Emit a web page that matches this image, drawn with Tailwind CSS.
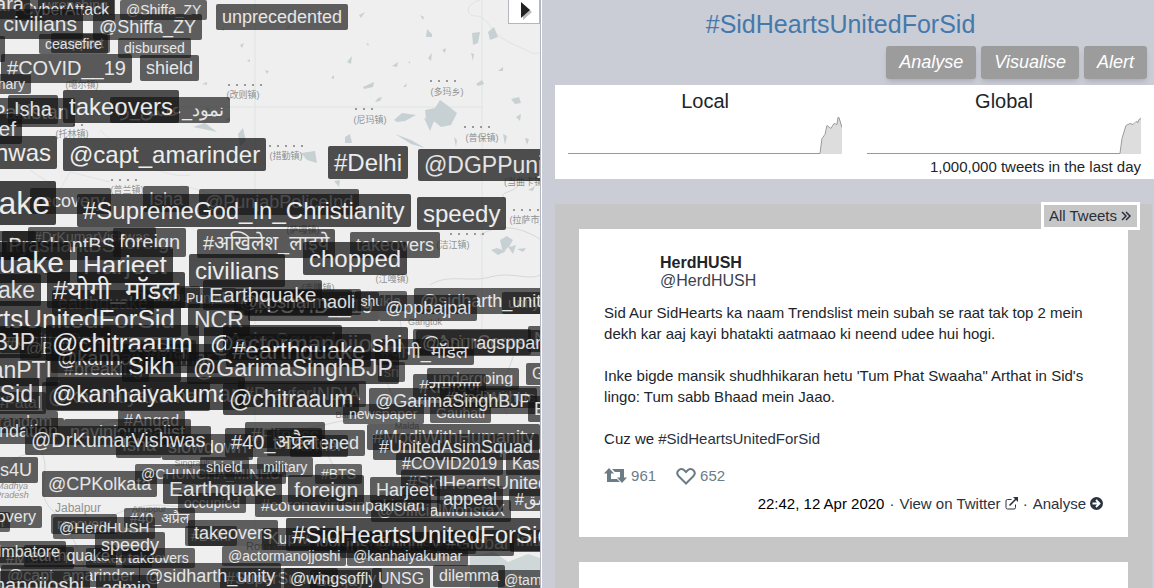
<!DOCTYPE html>
<html lang="en">
<head>
<meta charset="utf-8">
<title>#SidHeartsUnitedForSid</title>
<script src="https://cdn.jsdelivr.net/npm/@tailwindcss/browser@4"></script>
</head>
<body class="flex h-screen overflow-hidden bg-[#cacdd6] font-['Liberation_Sans','Noto_Sans','Noto_Sans_CJK_SC',sans-serif] text-[#212529]">

<main class="relative w-[46.8%] shrink-0 overflow-hidden bg-[#efefef]" aria-label="Trends map">
  <svg class="absolute top-0 left-0 h-[588px] w-[540px]" viewBox="0 0 540 588" fill="none">
    <g stroke="#e0e4e4">
      <path d="M0 107H482M482 0V330M255 0V588"/>
      <path d="M480 0c-16 5-14 16-4 16s14 12 22 19 20 11 30 16 8 1 12 2M100 130c20 20 60 50 90 45M180 185c30 6 60 24 90 18M30 170l30 20 10-18 40 10"/>
      <path d="M505 200c-8-10 10-6 14-16s14-4 22-6M430 285c18-12 40-2 60-8s40 4 50-2M480 235c20-12 40-8 60 4M0 470c30-30 60-10 90-38s60 8 100-8M40 450c14 20-8 40 12 60s40 60 30 78M60 540c40-12 60-40 110-34s90-50 160-28M250 430c60 10 90-20 140-10M320 430c4 30 24 40 20 70M400 320c8 30-24 40-10 70s10 20 30 40M515 330c5 40-25 50-8 85" stroke="#d6d8d8"/>
    </g>
    <path d="M470 588V556l24-4 14 10 20-8 12 4v30z" fill="#cfd7d8"/>
    <g fill="#c7d1d3">
      <path d="M425 110l10-2 5-8 7 5 10 8-6 12-10 2-6-5-9-3zM424 118l10 3-4 10zM394 120l8-7 14 2-11 6-8 1zM472 33l8-1-2 11-5 2zM488 32l6-5 4 10-8 3zM345 137l5-3 2 9h-7zM301 153l14-2 2 12-10-3zM395 134l16 6 14 8-14-4zM193 127l12-4 12 9-9-2zM238 134l5-6 3 13-6 5z"/>
      <path d="M347 62l5-6-1 8zM427 29l5 5v3h-6zM428 58l4-5-1 8zM442 50l4-2-1 5zM471 53l3 1-1 7zM476 84l6-4 2 4-6 2zM403 87l4-4-1 4zM363 87l11-5-1 5-9 2zM511 99l8-2 2 6-6 1zM503 134l4 2-2 9zM454 137l3 3-1 7zM491 250l6-2 9 3-8 4zM516 117l5-3-1 7zM525 138l4 1-2 6zM498 71l5-4v4zM392 66l6-4-1 5zM375 102l3-4 4-1-2 4zM334 181l6-1-1 7zM331 78l3-3v4zM285 30l6-6-1 3zM359 15l6-3-4 6zM420 15l4 2-1 3zM408 63l2-2v2zM366 43l3 1-1 2zM528 190l7-4-2 5zM225 120l5-3v4zM202 84l5-2v3zM240 45l4-2-2 5zM247 61l3-2v3zM221 30l3-2v3zM233 15l4-2-1 5zM265 70l4 1-2 3zM206 109l3-1v3z"/>
      <path d="M500 240l7-4 6 4-4 7 7-2-3 9-5-7-5 6zM517 249l9-1-3 4z"/>
    </g>
    <g fill="#8f9292" font-size="9" text-anchor="middle">
      <text x="370" y="123">(尼玛镇)</text><text x="447" y="95">(多玛乡)</text><text x="482" y="141">(普保镇)</text>
      <text x="286" y="159">(措勤镇)</text><text x="243" y="98">(改则镇)</text><text x="72" y="137">(托林镇)</text>
      <text x="127" y="193">(普兰镇)</text><text x="82" y="88">(噶尔镇)</text><text x="526" y="223">(拉萨市)</text>
      <text x="453" y="248">(洁江镇)</text><text x="392" y="282">(江嘎镇)</text><text x="318" y="291">(吉隆镇)</text><text x="303" y="233">(萨嘎镇)</text>
      <text x="525" y="185">(当曲卡镇)</text>
      <text x="425" y="325">Gangtok</text><text x="345" y="418">Barh</text><text x="407" y="429">Malda</text>
      <text x="192" y="466">Singrauli</text><text x="149" y="512">Anuppur</text><text x="12" y="489" font-style="italic">Madhya</text><text x="12" y="498" font-style="italic">Pradesh</text>
      <text x="78" y="512" font-size="12">Jabalpur</text><text x="268" y="550" font-size="11">Rourkela</text>
    </g>
    <path d="M355 109h20M430 81h32M464 127h32M269 146h34M228 85h34M111 180h30M73 125h14M450 234h38M513 210h28" stroke="#999" stroke-width="2" stroke-dasharray="2 6"/>
  </svg>
  <div id="labels"></div>
  <button type="button" aria-label="Collapse map" class="absolute -top-2 right-0 flex h-8 w-8 items-center justify-center border border-[#b4b6bb] bg-white">
    <svg class="mt-[6px] ml-1 h-5 w-4" viewBox="0 0 16 20"><path d="M5 3v16l9-8z" fill="#bbb"/><path d="M3 1v16l9-8z" fill="#222"/></svg>
  </button>
</main>

<aside class="min-w-0 flex-1 overflow-hidden border-l border-[#b4b7c0]">
  <div class="flex h-full flex-col border-l border-white pl-[13px]">
    <h1 class="shrink-0 pt-2 pr-7 text-center text-[25px] leading-8 text-[#4579ab]"><a href="#">#SidHeartsUnitedForSid</a></h1>
    <div class="flex shrink-0 justify-end gap-[5px] pt-[6px] pr-[7px] pb-[6px] text-lg leading-[33px] text-white italic">
      <button type="button" class="rounded-[3px] bg-[#9c9c9c] px-[13px] italic shadow-md">Analyse</button>
      <button type="button" class="rounded-[3px] bg-[#9c9c9c] px-[13px] italic shadow-md">Visualise</button>
      <button type="button" class="rounded-[3px] bg-[#9c9c9c] px-[13px] italic shadow-md">Alert</button>
    </div>
    <section class="shrink-0 bg-white px-[13px] pb-px">
      <div class="grid grid-cols-2 gap-[25px]">
        <div>
          <h2 class="pt-1 text-center text-xl leading-6">Local</h2>
          <svg class="mt-1 block h-[38px] w-full" viewBox="0 0 274 38" preserveAspectRatio="none"><path d="M252 37l2-15 3-4 2-9 4 3 3-5 3 1 1-8h1l3 10v27z" fill="#ddd"/><path d="M0 36.500H252l2-15 3-4 2-9 4 3 3-5 3 1 1-7h1l3 10" fill="none" stroke="#999"/></svg>
        </div>
        <div>
          <h2 class="pt-1 text-center text-xl leading-6">Global</h2>
          <svg class="mt-1 block h-[38px] w-full" viewBox="0 0 274 38" preserveAspectRatio="none"><path d="M253 37l2-15 4-13 4-2h4l4-3 3-4v37z" fill="#ddd"/><path d="M0 36.500H253l2-15 4-13 4-2 3 1 3-3 2 1 1-3 2-1" fill="none" stroke="#999"/></svg>
        </div>
      </div>
      <p class="pt-px text-right text-[15px] leading-[22px]">1,000,000 tweets in the last day</p>
    </section>
    <section class="relative mt-[25px] mr-[2px] min-h-0 flex-1 bg-[#c6c6c6] px-6 pt-[25px]">
      <a href="#" class="absolute -top-[2px] right-3 flex items-center border-3 border-white bg-[#c6c6c6] px-[5px] text-[15px] leading-[22px] text-[#292f3a]">All Tweets
        <svg class="ml-[3px] h-3 w-3" viewBox="0 0 12 12" fill="none" stroke="currentColor" stroke-width="1.500"><path d="M2 2l4 4-4 4M6 2l4 4-4 4"/></svg></a>
      <article class="bg-white px-[25px] pt-[25px] pb-[23px] text-[15px] leading-[21px]">
        <div class="pl-14 text-base leading-[18px]">
          <div class="font-bold">HerdHUSH</div>
          <a href="#" class="block text-[#3a424b]">@HerdHUSH</a>
        </div>
        <p class="mt-3">Sid Aur SidHearts ka naam Trendslist mein subah se raat tak top 2 mein<br>dekh kar aaj kayi bhatakti aatmaao ki neend udee hui hogi.</p>
        <p class="mt-[21px]">Inke bigde mansik shudhhikaran hetu 'Tum Phat Swaaha" Arthat in Sid's<br>lingo: Tum sabb Bhaad mein Jaao.</p>
        <p class="mt-[21px]">Cuz we <a href="#" class="text-[#2b3340]">#SidHeartsUnitedForSid</a></p>
        <div class="mt-[17px] flex items-center text-[15px] leading-5 text-[#6c7c87]">
          <svg class="h-4 w-[23px]" viewBox="0 0 23 16" fill="currentColor"><path d="M5 0l5 5.500H7V11h6l3 3H3V5.500H0zM8 1h12v8.500h3L18 15l-5-5.500h3V4h-5z"/></svg>
          <span class="ml-1">961</span>
          <svg class="ml-5 h-[17px] w-5" viewBox="0 0 20 17" fill="none" stroke="currentColor" stroke-width="2"><path d="M10 15.500L2.500 8C-1 4 4-.8 8 2l2 2 2-2c4-2.800 9 2 5.500 6z"/></svg>
          <span class="ml-1">652</span>
        </div>
        <div class="mt-[7px] flex items-center justify-end text-[#2b3340]">
          <time class="text-black">22:42, 12 Apr 2020</time><span class="mx-[5px]">·</span>
          <a href="#" class="flex items-center">View on Twitter<svg class="ml-1 h-[13px] w-[13px]" viewBox="0 0 13 13" fill="none" stroke="currentColor"><path d="M6.500 2.500H2.500Q1 2.500 1 4v6.500Q1 12 2.500 12h6.500q1.500 0 1.500-1.500V7.500"/><path d="M4.500 8.500L11 2" stroke-width="1.600"/><path d="M8 0h5v5z" fill="currentColor" stroke="none"/></svg></a><span class="mx-[5px]">·</span>
          <a href="#" class="flex items-center">Analyse<svg class="ml-1 h-[13px] w-[13px]" viewBox="0 0 13 13"><circle cx="6.500" cy="6.500" r="6.500" fill="currentColor"/><path d="M2.500 6.500h6M6 3l3.500 3.500L6 10" fill="none" stroke="#fff" stroke-width="1.800"/></svg></a>
        </div>
      </article>
      <article class="mt-[25px] h-24 bg-white"></article>
    </section>
  </div>
</aside>

<script>
const sizes = {
  14: "text-sm leading-5 bg-[#111]/62 text-white/85",
  15: "text-[15px] leading-[22px] bg-[#111]/62 text-white/85",
  16: "text-base leading-[22px] bg-[#111]/65 text-white/85",
  18: "text-lg leading-[26px] bg-[#111]/66 text-white/85",
  20: "text-xl leading-[29px] bg-[#111]/68 text-white/85",
  21: "text-[21px] leading-[30px] bg-[#111]/70 text-white/85",
  23: "text-[23px] leading-8 bg-[#111]/73 text-white/85",
  24: "text-2xl leading-[33px] bg-[#111]/73 text-white/90",
  26: "text-[26px] leading-9 bg-[#111]/75 text-white/90",
  30: "text-3xl leading-[41px] bg-[#111]/78 text-white/90",
  32: "text-[32px] leading-[44px] bg-[#111]/78 text-white/90"
};
// [text, x, y, size, anchor]: x is the left edge, or the right edge when anchor is "r"
const trends = [
  ["wrenching",38,-5,14],["CyberAttack",16,-1,16],["Sahara",30,-10,20,"r"],["@Shiffa_ZY",120,0,14],["@Shiffa_ZY",93,14,18],["civilians",83,9,21,"r"],
  ["support",110,33,14,"r"],["ceasefire",39,34,14],["disbursed",118,38,14],["Delhi",5,36,18,"r"],["#COVID__19",132,54,20,"r"],["shield",140,55,18],["culinary",31,74,14,"r"],
  ["Pakistan",75,98,20,"r"],["Isha",8,95,20],["نمود_عشق_را",230,97,18,"r"],["takeovers",63,90,24],["relief",22,114,21,"r"],["@DrKumarVishwas",57,136,24,"r"],["@capt_amarinder",63,138,24],
  ["unprecedented",216,4,18],["#Delhi",328,146,24],["@DGPPunjabPolice",418,149,23],
  ["recovery",30,188,18],["Isha",143,186,18],["@PunjabPoliceInd",199,189,18],["#SupremeGod_In_Christianity",77,194,24],["Earthquake",56,181,32,"r"],["speedy",417,197,24],
  ["#DrKumarVishwas",28,227,14],["foreign",113,228,20],["#Humanity",36,231,20,"r"],["PrashantBS",121,231,20,"r"],["#अखिलेश_लाइये",197,229,20],["takeovers",350,232,18],["chopped",303,242,24],
  ["Earthquake",70,242,30,"r"],["Harjeet",77,247,26],["civilians",189,254,24],["Jabalpur",200,286,15,"r"],["Punjab",180,288,14],["earthquake",52,290,18],["Earthquake",41,274,23,"r"],["#योगी_मॉडल",47,272,26],
  ["@KiranBedi",244,290,18],["#COVID__19",248,292,20],["@kpsharmaoli",361,289,18,"r"],["shukla",407,291,14,"r"],["Earthquake",203,280,21],["unity",502,292,15],["@sidharth_unity",414,288,18],["@ppbajpai",379,295,18],
  ["#ChittorPain",0,327,18],["NCR",188,304,23],["#SidHeartsUnitedForSid",181,301,26,"r"],["@BellaPaima",20,338,16],["AsimSquad",342,325,21,"r"],["@GarimaSinghBJP",41,326,23,"r"],
  ["#breaking",58,356,18],["@kanhaiyakumar",51,344,20],["#शिक्षा",140,340,18],["@chitraaum",46,325,26],["N95",528,326,18],["@AsimCorps",413,329,18],["@anuragspparty",416,330,18],["#योगी_मॉडल",474,339,18,"r"],["@actormanojjoshi",204,327,24],["#earthquake",226,334,24],
  ["ImranKhanPTI",58,354,23,"r"],["Sikh",122,349,24],["sri",378,362,14],["@GarimaSinghBJP",187,352,23],["undergoing",427,368,16],["#रामायण",413,374,18],
  ["#Fatal",-10,392,16],["#PrayforINDIA",238,381,18],["@kanhaiyakumar",42,382,20],["ForSid",39,378,23,"r"],["@kanhaiyakumar",46,377,24],["@chitraaum",223,383,23],["#ModiWithUs",440,386,15],["newspaper",343,404,14],["Gauhati",430,403,14],["@GarimaSinghBJP",369,388,18],["Gujarat",526,363,16],["Bihar",528,396,18],
  ["random",58,411,16,"r"],["Foundation",64,418,18,"r"],["#Angad",118,410,16],["navinjournalist",64,419,18],["Isha",116,432,18],["slowdown",162,434,18],["#Fitness",245,422,18],["@DrKumarVishwas",25,426,20],["farmer",290,435,16],["threatened",365,430,18,"r"],["#40_अप्रैल",225,428,20],["#ModiWithHumanity",367,424,18],["#UnitedAsimSquad",373,434,18],
  ["#Heroes4U",38,457,18,"r"],["@CPKolkata",42,471,18],["@CHUNGHA_MINHO",135,464,14],["shield",200,457,14],["military",257,457,14],["#BTS",315,464,14],["#COVID2019",396,453,16],["Kashmir",506,453,16],
  ["occupied",178,493,14],["@OfficialMonstaX",371,500,16],["#coronavirusinpakistan",255,495,16],["Earthquake",163,474,21],["foreign",288,475,21],["#SidHeartsUnitedForSid",401,470,18],["Harjeet",370,477,18],["appeal",437,486,18],["#عشق",509,489,16],
  ["Asim",10,512,14,"r"],["recovery",42,506,16,"r"],["recovery",51,514,14],["#40_अप्रैल",124,508,14],["@HerdHUSH",53,517,15],["#Delhi",185,526,14],["Kupwara",262,528,16],["takeovers",188,520,18],
  ["looking",310,531,16],["institutions",340,532,18],["@night_vision",370,532,15],["#Global",440,530,18],["Initiative",510,530,16],["#SidHeartsUnitedForSid",286,518,24],
  ["#Mumbai",0,547,15],["takeover",86,548,14],["takeovers",122,548,14],["earthquake",116,545,16,"r"],["Coimbatore",66,541,16,"r"],["speedy",95,532,18],["@actormanojjoshi",222,546,14],["@kanhaiyakumar",347,546,14],
  ["@capt_amarinder",1,565,16],["#SuperSunday",220,568,16],["@sidharth_unity",139,563,18],["@actormanojjoshi",90,571,20,"r"],["admin",96,575,18],["Sanjay",310,570,16],["@wingsoffly",284,568,16],["UNSG",372,568,16],["@tamjeed",498,570,14],["dilemma",433,565,16]
];
const layer = document.getElementById("labels");
for (const [text, x, y, size, anchor] of trends) {
  const label = document.createElement("a");
  label.href = "#";
  label.dir = "ltr";
  label.className = "absolute whitespace-nowrap rounded-[2px] px-[6px] " + sizes[size];
  label.style.top = y + "px";
  if (anchor) label.style.right = `calc(100% - ${x}px)`;
  else label.style.left = x + "px";
  label.textContent = text;
  layer.append(label);
}
</script>
</body>
</html>
